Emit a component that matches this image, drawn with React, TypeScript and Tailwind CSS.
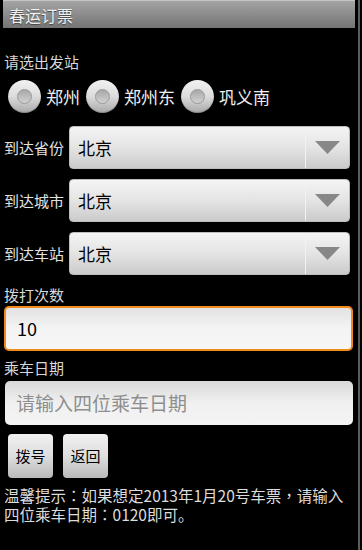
import React from "react";

const FONT = { fontFamily: '"Droid Sans", "Noto Sans CJK SC", "Liberation Sans", sans-serif' };
// TC font centres full-width punctuation, like the old Android fallback font
const TC = { fontFamily: '"Noto Sans CJK TC", sans-serif' };

const Radio: React.FC<{ label: string }> = ({ label }) => (
  <div className="flex items-center">
    <div className="w-[33px] h-[33px] rounded-full bg-gradient-to-b from-[#f2f2f2] via-[#dcdcdc] to-[#a9a9a9] flex items-center justify-center shadow-[inset_0_-1px_1px_rgba(0,0,0,0.2)]">
      <div className="w-[15px] h-[15px] rounded-full bg-gradient-to-b from-[#a8a8a8] to-[#d2d2d2] border border-[#9a9a9a]" />
    </div>
    <span className="ml-[5px] text-[17px] text-[#efefef] leading-none">{label}</span>
  </div>
);

const Spinner: React.FC<{ label: string; value: string }> = ({ label, value }) => (
  <div className="flex items-center h-[43px]">
    <span className="w-[69px] pl-[4px] text-[15px] text-[#e2e2e2] leading-none">{label}</span>
    <div className="flex-1 h-full mr-[8px] rounded-[4px] bg-gradient-to-b from-[#f4f4f4] via-[#e4e4e4] to-[#cbcbcb] flex items-center border border-[#bdbdbd]">
      <span className="flex-1 pl-[8px] text-[17px] text-black leading-none">{value}</span>
      <div className="w-px h-full bg-[#c8c8c8] border-r border-[#f2f2f2]" />
      <div className="w-[43px] flex items-center justify-center">
        <svg width="25" height="13" viewBox="0 0 25 13">
          <polygon points="0,0 25,0 12.5,13" fill="#878787" />
        </svg>
      </div>
    </div>
  </div>
);

const Btn: React.FC<{ label: string }> = ({ label }) => (
  <div className="w-[45px] h-[44px] rounded-[4px] bg-gradient-to-b from-[#f0f0f0] via-[#dedede] to-[#b9b9b9] flex items-center justify-center text-[15px] text-black">
    {label}
  </div>
);

export default function App() {
  return (
    <div className="w-[362px] h-[550px] bg-black flex overflow-hidden" style={FONT}>
      <div className="w-[358px] flex flex-col">
        <div className="mx-[3px] h-[28px] bg-gradient-to-b from-[#a4a4a4] to-[#747474] border-t border-[#c4c4c4] flex items-center pl-[6px]">
          <span className="text-[16px] text-[#f0f0f0] leading-none [text-shadow:0_1px_1px_#444]">春运订票</span>
        </div>

        <div className="mt-[25px] pl-[4px] text-[15px] text-[#d8d8d8] leading-[18px]">请选出发站</div>

        <div className="mt-[9px] flex items-center pl-[8px] gap-[6px]">
          <Radio label="郑州" />
          <Radio label="郑州东" />
          <Radio label="巩义南" />
        </div>

        <div className="mt-[13px] flex flex-col gap-[10px]">
          <Spinner label="到达省份" value="北京" />
          <Spinner label="到达城市" value="北京" />
          <Spinner label="到达车站" value="北京" />
        </div>

        <div className="mt-[11px] pl-[4px] text-[15px] text-[#d8d8d8] leading-[18px]">拨打次数</div>
        <div className="mt-[2px] ml-[4px] mr-[5px] h-[45px] rounded-[5px] border-2 border-[#f08a1c] bg-gradient-to-b from-[#e2e2e2] via-[#f4f4f4] to-[#f6f6f6] flex items-center pl-[11px] text-[18px] text-black">
          10
        </div>

        <div className="mt-[8px] pl-[4px] text-[15px] text-[#d8d8d8] leading-[18px]">乘车日期</div>
        <div className="mt-[4px] ml-[5px] mr-[5px] h-[44px] rounded-[5px] bg-gradient-to-b from-[#d9d9d9] via-[#f0f0f0] to-[#f4f4f4] flex items-center pl-[11px] text-[19px] text-[#8e8e8e]">
          请输入四位乘车日期
        </div>

        <div className="mt-[9px] flex gap-[10px] pl-[8px]">
          <Btn label="拨号" />
          <Btn label="返回" />
        </div>

        <div className="mt-[8px] pl-[4px] pr-[4px] text-[15.5px] text-[#dcdcdc] leading-[19px]">
          温馨提示<span style={TC}>：</span>如果想定2013年1月20号车票<span style={TC}>，</span>请输入四位乘车日期<span style={TC}>：</span>0120即可。
        </div>
      </div>
      <div className="w-[2px] h-full bg-[#5c5c5c]" />
    </div>
  );
}
